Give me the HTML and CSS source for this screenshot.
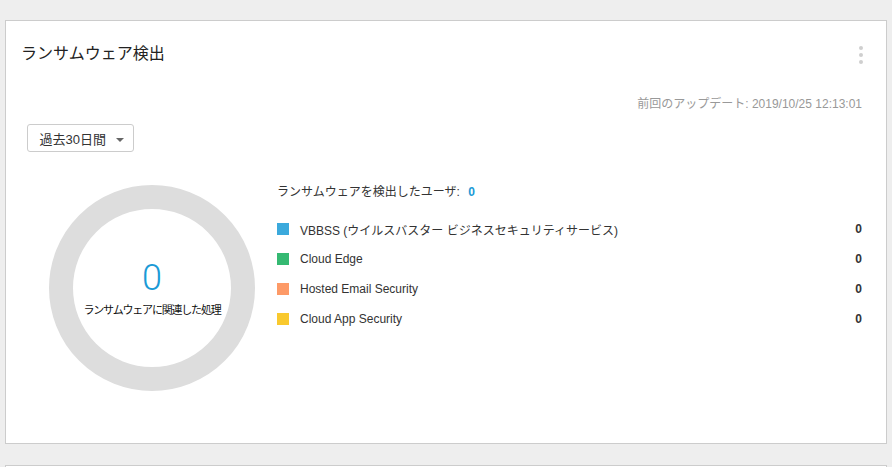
FILE: index.html
```html
<!DOCTYPE html>
<html lang="ja">
<head>
  <meta charset="UTF-8">
  <title>ランサムウェア検出</title>
  <link rel="stylesheet" href="styles.css">
</head>
<body>

  <div class="card">
    <div class="card-header">
      <div class="card-title">ランサムウェア検出</div>
      <button class="kebab" aria-label="menu"><span></span><span></span><span></span></button>
    </div>

    <div class="last-update">前回のアップデート: 2019/10/25 12:13:01</div>

    <div class="toolbar">
      <button class="period-select">過去30日間 <span class="caret"></span></button>
    </div>

    <div class="widget-body">
      <div class="donut">
        <div class="donut-value">0</div>
        <div class="donut-label">ランサムウェアに関連した処理</div>
      </div>

      <div class="legend">
        <div class="legend-head">ランサムウェアを検出したユーザ: <span class="legend-total">0</span></div>
        <div class="legend-row">
          <span class="swatch vbbss"></span>
          <span class="legend-name">VBBSS (ウイルスバスター ビジネスセキュリティサービス)</span>
          <span class="legend-count">0</span>
        </div>
        <div class="legend-row">
          <span class="swatch edge"></span>
          <span class="legend-name">Cloud Edge</span>
          <span class="legend-count">0</span>
        </div>
        <div class="legend-row">
          <span class="swatch hes"></span>
          <span class="legend-name">Hosted Email Security</span>
          <span class="legend-count">0</span>
        </div>
        <div class="legend-row">
          <span class="swatch cas"></span>
          <span class="legend-name">Cloud App Security</span>
          <span class="legend-count">0</span>
        </div>
      </div>
    </div>
  </div>

  <div class="card card-next"></div>

</body>
</html>
```

FILE: styles.css
```css
html {
  overflow: hidden;
}

body {
  margin: 0;
  padding: 20px 5px 0;
  background-color: #eeeeee;
  font-family: "Liberation Sans", Arial, "Noto Sans CJK JP", sans-serif;
  color: #333;
  height: 467px;
  overflow: hidden;
  box-sizing: border-box;
}

.card {
  background-color: white;
  border: 1px solid #cccccc;
  height: 424px;
  box-sizing: border-box;
}

.card-next {
  margin-top: 21px;
  height: 2px;
  border-bottom: none;
}

.card-header {
  display: flex;
  justify-content: space-between;
  align-items: center;
  padding: 21px 23px 0 15px;
  height: 24px;
}

.card-title {
  font-size: 16px;
  line-height: 24px;
  color: #222;
}

.kebab {
  display: flex;
  flex-direction: column;
  gap: 3px;
  background: transparent;
  border: none;
  padding: 0;
  margin-top: 2px;
  cursor: pointer;
}

.kebab span {
  width: 4px;
  height: 4px;
  border-radius: 50%;
  background-color: #cfcfcf;
}

.last-update {
  margin-top: 30px;
  padding-right: 24px;
  text-align: right;
  font-size: 12px;
  line-height: 16px;
  color: #999;
}

.toolbar {
  margin-top: 12px;
  padding-left: 21px;
}

.period-select {
  height: 28px;
  width: 107px;
  background-color: white;
  border: 1px solid #cccccc;
  border-radius: 3px;
  font-family: inherit;
  font-size: 13px;
  color: #333;
  padding: 0 0 0 2px;
  cursor: pointer;
}

.caret {
  display: inline-block;
  width: 0;
  height: 0;
  margin-left: 6px;
  vertical-align: middle;
  border-left: 4px solid transparent;
  border-right: 4px solid transparent;
  border-top: 4px solid #666;
}

.widget-body {
  display: flex;
  margin-top: 31px;
  padding: 0 24px 0 43px;
  gap: 22px;
}

.donut {
  width: 206px;
  height: 206px;
  margin-top: 2px;
  border: 24px solid #dddddd;
  border-radius: 50%;
  box-sizing: border-box;
  display: flex;
  flex-direction: column;
  align-items: center;
  padding-top: 47px;
  flex-shrink: 0;
}

.donut-value {
  font-family: Roboto, "Liberation Sans", sans-serif;
  font-weight: 300;
  font-size: 36px;
  line-height: 44px;
  color: #1a9ad6;
}

.donut-label {
  margin-top: 3px;
  font-size: 11px;
  line-height: 14px;
  letter-spacing: -1.2px;
  color: #111;
  white-space: nowrap;
}

.legend {
  flex: 1;
  margin-top: 1px;
  font-size: 12px;
}

.legend-head {
  line-height: 16px;
  margin-bottom: 14px;
}

.legend-total {
  margin-left: 5px;
  color: #1a9ad6;
  font-weight: bold;
}

.legend-row {
  display: flex;
  align-items: center;
  height: 30px;
}

.swatch {
  width: 12px;
  height: 12px;
  margin-right: 11px;
}

.swatch.vbbss { background-color: #3ba9dc; }
.swatch.edge { background-color: #35b972; }
.swatch.hes { background-color: #fd9a67; }
.swatch.cas { background-color: #f9c92e; }

.legend-name {
  flex: 1;
}

.legend-count {
  font-weight: bold;
}
```
